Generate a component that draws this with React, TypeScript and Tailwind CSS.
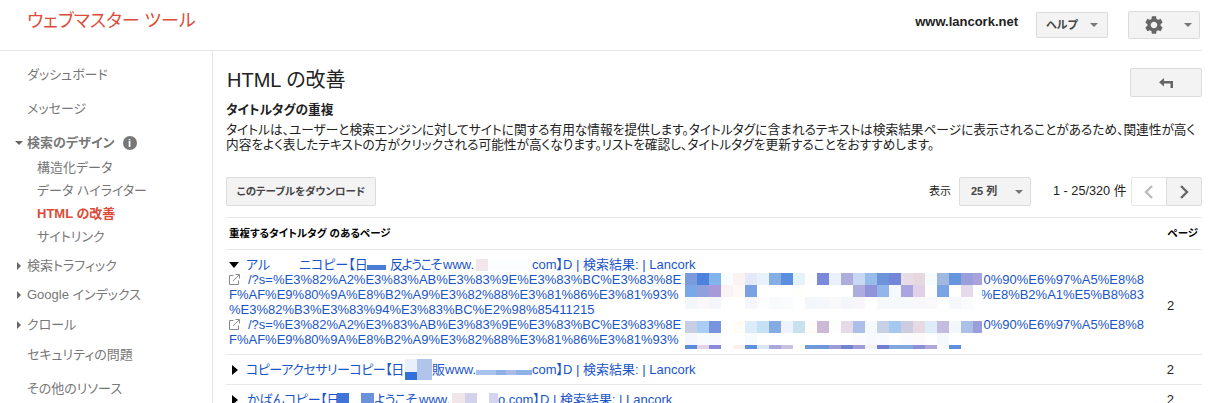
import React from "react";
import { MdSettings } from "react-icons/md";

const font = "font-['Liberation_Sans','Noto_Sans_CJK_JP',sans-serif] [font-feature-settings:'palt']";

function Caret() {
  return <span className="ml-auto w-0 h-0 border-x-[4px] border-x-transparent border-t-[4px] border-t-[#777]" />;
}

function Cells({ colors, h = 12 }: { colors: string[]; h?: number }) {
  return (
    <div className="flex w-[297px] overflow-hidden">
      {colors.map((c, i) => (
        <span key={i} className="block w-[12px] shrink-0" style={{ backgroundColor: c, height: h }} />
      ))}
    </div>
  );
}

const r1 = ["#7b9bdc","#4d82dc","#80b4ea","#f8fdff","#faf3f2","#e3e9f8","#e8f2fb","#85aee3","#5a8edf","#e4f2f9","#fdfdfd","#7a8ad8","#eaf1fb","#aeacdd","#c8d8f2","#96bdea","#6d94d8","#7387d8","#e8dce8","#e5d8df","#f4fcfd","#a0b8e0","#6595dd","#9a9fdb","#a8a3da"];
const r2 = ["#7aa8e6","#8fa0dd","#a89ad8","#f9f4f3","#fff9f6","#7aa2e2","#ffffff","#ffffff","#ffffff","#fefefc","#ffffff","#ffffff","#ffffff","#ffffff","#aeacdf","#9194da","#93b5ea","#f5fafc","#a9a5de","#e0d0e8","#fcfdfc","#78a3e4","#ffffff","#e5d9ea","#ffffff"];
const r3 = ["#f3f6fb","#fbf8fb","#f5f6fb","#ffffff","#ffffff","#f5f7fc","#fdfdfd","#f9fafc","#fafbfd","#ffffff","#f3f7fb","#f4f7fb","#f9f9fc","#f4f6fb","#f8f6fa","#ffffff","#f6f8fc","#f5f9fc","#f6f9fc","#f8f8fb","#fbf8fb","#ffffff","#f5f7fb","#fafbfd","#ffffff"];
const r4 = ["#c8cfe4","#aacdf5","#7894de","#ffffff","#fefcf5","#dcecfa","#c4e1f6","#84abe2","#eef3fd","#c9e0ee","#fffbf8","#ccb9d6","#fdfdfd","#e6dae8","#adbfe8","#f3f9fd","#c8d0e6","#a5c8f0","#cdcbe0","#e6d9e2","#dcecf9","#c5bde0","#f3f6fb","#abc0e8","#9a9fdc"];
const r5 = ["#f5f7fc","#f9fafd","#fafafd","#ffffff","#ffffff","#f8fafc","#ffffff","#ffffff","#ffffff","#ffffff","#ffffff","#ffffff","#ffffff","#ffffff","#fbfbfd","#f8f9fc","#f9fafd","#ffffff","#fbfafc","#fcfafb","#ffffff","#f6f8fc","#ffffff","#ffffff","#ffffff"];
const r6 = ["#5b8cdc","#e3d2e8","#8a8ad8","#ffffff","#fbf0ea","#5f90dc","#d8e8f8","#a9a8dc","#c8bfe0","#ffffff","#7099dc","#7097dc","#a09bd8","#6f85d4","#a09cd8","#f2f1f3","#6f7ed2","#80a8de","#80a8de","#8c8fd6","#afa6dc","#fbfbfc","#5f8fdc","#ffffff","#ffffff"];
const bar = ["#a9c4ec","#a9c4ec","#8fb1e4","#a9bde8","#8fb1e4","#8fb1e4"];

const longA = "/?s=%E3%82%A2%E3%83%AB%E3%83%9E%E3%83%BC%E3%83%8E";
const longB = "F%AF%E9%80%9A%E8%B2%A9%E3%82%88%E3%81%86%E3%81%93%";
const link = "text-[13px] text-[#1a55c8]";

function ExtIcon() {
  return (
    <svg width="11" height="11" viewBox="0 0 11 11" fill="none" stroke="#8a8a8a" strokeWidth="1" className="shrink-0">
      <path d="M4.5 1.5H.5v9h9V6.5" />
      <path d="M4 7L10 1M6.5.5h4v4" />
    </svg>
  );
}

function Tri({ open }: { open?: boolean }) {
  return open ? (
    <span className="w-0 h-0 border-x-[5px] border-x-transparent border-t-[6px] border-t-black" />
  ) : (
    <span className="w-0 h-0 border-y-[5px] border-y-transparent border-l-[6px] border-l-black ml-[3px]" />
  );
}

function SideTri({ open }: { open?: boolean }) {
  return open ? (
    <span className="absolute left-[15px] top-[6px] w-0 h-0 border-x-[4px] border-x-transparent border-t-[4px] border-t-[#666]" />
  ) : (
    <span className="absolute left-[17px] top-[4px] w-0 h-0 border-y-[4px] border-y-transparent border-l-[4px] border-l-[#666]" />
  );
}

function Side({ children, mt, tri, open }: { children: React.ReactNode; mt: string; tri?: boolean; open?: boolean }) {
  return (
    <div className={`relative pl-[27px] h-[16px] leading-[16px] text-[13px] text-[#777] ${mt}`}>
      {tri && <SideTri open={open} />}
      {children}
    </div>
  );
}

function Sub({ children, mt, active }: { children: React.ReactNode; mt: string; active?: boolean }) {
  return (
    <div className={`pl-[37px] h-[16px] leading-[16px] text-[13px] ${active ? "font-bold text-[#dd4b39]" : "text-[#777]"} ${mt}`}>
      {children}
    </div>
  );
}

function UrlLine({ left, right, icon }: { left: string; right?: string; icon?: boolean }) {
  return (
    <div className="flex items-center w-[915px] h-[15px] leading-[15px] whitespace-nowrap">
      {icon && <ExtIcon />}
      <span className={icon ? "ml-[8px]" : ""}>{left}</span>
      {right && <span className="ml-auto">{right}</span>}
    </div>
  );
}

export default function App() {
  return (
    <div className={`w-[1227px] h-[403px] overflow-hidden bg-white ${font}`}>
      <div className="w-[1202px]">
        <header className="h-[51px] border-b border-[#e5e5e5] flex items-center pl-[27px] pb-[9px]">
          <div className="text-[18px] leading-[24px] text-[#dd4b39] whitespace-nowrap">ウェブマスター ツール</div>
          <div className="ml-auto text-[13px] font-bold text-[#222] mt-[3px]">www.lancork.net</div>
          <div className="ml-[18px] mt-[9px] w-[72px] h-[26px] flex items-center pl-[9px] pr-[9px] bg-[#f3f3f3] border border-[#dcdcdc] rounded-[2px] text-[11px] font-bold text-[#444]">
            ヘルプ
            <Caret />
          </div>
          <div className="ml-[20px] mr-[2px] mt-[9px] w-[72px] h-[28px] flex items-center pl-[14px] pr-[7px] bg-[#f3f3f3] border border-[#dcdcdc] rounded-[2px]">
            <MdSettings size={22} color="#666" />
            <Caret />
          </div>
        </header>
        <div className="flex h-[352px]">
          <nav className="w-[213px] shrink-0 border-r border-[#e5e5e5] pt-[16px]">
            <Side mt="">ダッシュボード</Side>
            <Side mt="mt-[18px]">メッセージ</Side>
            <Side mt="mt-[18px]" tri open>
              <span className="flex items-center gap-[8px] font-bold">
                検索のデザイン
                <span className="w-[14px] h-[14px] rounded-full bg-[#777] text-white text-[11px] leading-[14px] text-center font-bold">i</span>
              </span>
            </Side>
            <Sub mt="mt-[9px]">構造化データ</Sub>
            <Sub mt="mt-[7px]">データ ハイライター</Sub>
            <Sub mt="mt-[7px]" active>HTML の改善</Sub>
            <Sub mt="mt-[7px]">サイトリンク</Sub>
            <Side mt="mt-[13px]" tri>検索トラフィック</Side>
            <Side mt="mt-[13px]" tri>Google インデックス</Side>
            <Side mt="mt-[14px]" tri>クロール</Side>
            <Side mt="mt-[14px]">セキュリティの問題</Side>
            <Side mt="mt-[18px]">その他のリソース</Side>
          </nav>
          <main className="flex-1 min-w-0 pl-[13px]">
            <div className="flex items-start pt-[17px] h-[45px]">
              <h1 className="ml-px text-[20px] leading-[24px] text-[#222]">HTML の改善</h1>
              <div className="ml-auto w-[72px] h-[29px] bg-[#f3f3f3] border border-[#dcdcdc] rounded-[2px] flex items-center justify-center">
                <svg width="14" height="10" viewBox="0 0 14 10" fill="#666">
                  <path d="M5 0L0 4.2 5 8.4V5.4H11.5V10H14V3H5z" />
                </svg>
              </div>
            </div>
            <h2 className="mt-[6px] text-[12.7px] leading-[16px] font-bold text-[#222]">タイトルタグの重複</h2>
            <p className="mt-[5px] text-[12.7px] leading-[15px] text-[#222] whitespace-nowrap">
              タイトルは、ユーザーと検索エンジンに対してサイトに関する有用な情報を提供します。タイトルタグに含まれるテキストは検索結果ページに表示されることがあるため、関連性が高く
              <br />
              内容をよく表したテキストの方がクリックされる可能性が高くなります。リストを確認し、タイトルタグを更新することをおすすめします。
            </p>
            <div className="mt-[24px] flex items-center h-[29px]">
              <button className="w-[150px] h-[29px] bg-[#f3f3f3] border border-[#dcdcdc] rounded-[2px] text-[10.5px] font-bold text-[#444]">
                このテーブルをダウンロード
              </button>
              <span className="ml-auto text-[11px] text-[#222]">表示</span>
              <div className="ml-[8px] w-[72px] h-[29px] flex items-center pl-[11px] pr-[7px] bg-[#f3f3f3] border border-[#dcdcdc] rounded-[2px] text-[11px] font-bold text-[#444]">
                25 列
                <Caret />
              </div>
              <span className="ml-[22px] w-[78px] text-[12.7px] text-[#222] whitespace-nowrap">1 - 25/320 件</span>
              <div className="flex">
                <div className="w-[36px] h-[29px] border border-[#e8e8e8] rounded-l-[2px] bg-white flex items-center justify-center">
                  <svg width="10" height="14" viewBox="0 0 10 14" fill="none" stroke="#bbb" strokeWidth="2.4"><path d="M8 1L2 7l6 6" /></svg>
                </div>
                <div className="w-[36px] h-[29px] -ml-px border border-[#dcdcdc] rounded-r-[2px] bg-[#f3f3f3] flex items-center justify-center">
                  <svg width="10" height="14" viewBox="0 0 10 14" fill="none" stroke="#666" strokeWidth="2.4"><path d="M2 1l6 6-6 6" /></svg>
                </div>
              </div>
            </div>
            <div className="mt-[11px] h-[33px] border-y border-[#e8e8e8] flex items-center pl-[3px] pr-[4px] text-[10.5px] font-bold text-black">
              <span>重複するタイトルタグ のあるページ</span>
              <span className="ml-auto">ページ</span>
            </div>
            <div className={`h-[105px] border-b border-[#e8e8e8] flex pl-[3px] pt-[7px] ${link}`}>
              <div className="w-[917px] shrink-0">
                <div className="flex items-center h-[15px] leading-[15px] whitespace-nowrap">
                  <Tri open />
                  <span className="ml-[7px] w-[53px] shrink-0">アル</span>
                  <span className="w-[68px] shrink-0">ニコピー【日</span>
                  <span className="w-[19px] h-[5px] mt-[6px] bg-[#4a7bd5] shrink-0" />
                  <span className="ml-[4px] w-[53px] shrink-0 tracking-[-1.5px]">反ようこそ</span>
                  <span className="w-[33px] shrink-0">www.</span>
                  <span className="block w-[12px] h-[12px] bg-[#f3e6ea] shrink-0" />
                  <span className="block w-[44px] h-[12px] bg-[#fbfdfe] shrink-0" />
                  <span>com】D | 検索結果: | Lancork</span>
                </div>
                <div className="relative">
                  <UrlLine icon left={longA} right="0%90%E6%97%A5%E8%8" />
                  <UrlLine left={longB} right="%E8%B2%A1%E5%B8%83" />
                  <UrlLine left="%E3%82%B3%E3%83%94%E3%83%BC%E2%98%85411215" />
                  <UrlLine icon left={longA} right="0%90%E6%97%A5%E8%8" />
                  <UrlLine left={longB} />
                  <div className="absolute left-[456px] top-[1px]">
                    <Cells colors={r1} />
                    <Cells colors={r2} />
                    <Cells colors={r3} />
                  </div>
                  <div className="absolute left-[456px] top-[49px]">
                    <Cells colors={r4} />
                    <Cells colors={r5} />
                    <Cells colors={r6} h={4} />
                  </div>
                </div>
              </div>
              <div className="ml-[21px] self-center text-[13px] text-[#222]">2</div>
            </div>
            <div className={`h-[30px] border-b border-[#e8e8e8] flex items-center pl-[3px] whitespace-nowrap ${link}`}>
              <Tri />
              <span className="ml-[8px] w-[159px] shrink-0 tracking-[-0.5px]">コピーアクセサリーコピー【日</span>
              <span className="grid grid-cols-[12px_15px] grid-rows-[13px_8px] shrink-0">
                <span className="bg-[#eaf0fb]" />
                <span className="row-span-2 bg-[#b0c4ec]" />
                <span className="bg-[#3370d8]" />
              </span>
              <span className="w-[44px] shrink-0">販www.</span>
              <span className="flex mt-[5px] w-[56px] shrink-0 overflow-hidden">
                {bar.map((c, i) => (
                  <span key={i} className="block w-[10px] h-[5px] shrink-0" style={{ backgroundColor: c }} />
                ))}
              </span>
              <span>com】D | 検索結果: | Lancork</span>
              <span className="ml-auto mr-[28px] text-[#222]">2</span>
            </div>
            <div className={`h-[30px] flex items-center pl-[3px] whitespace-nowrap ${link}`}>
              <Tri />
              <span className="ml-[9px] w-[90px] shrink-0 tracking-[-0.3px]">かばんコピー【日</span>
              <span className="block w-[12px] h-[14px] bg-[#3f74d8] shrink-0" />
              <span className="w-[12px] shrink-0" />
              <span className="block w-[13px] h-[14px] bg-[#6a92dd] shrink-0" />
              <span className="w-[45px] shrink-0 tracking-[-0.7px]">ようこそ</span>
              <span className="w-[33px] shrink-0">www.</span>
              <span className="block w-[13px] h-[14px] bg-[#f0e6ea] shrink-0" />
              <span className="block w-[12px] h-[14px] bg-[#d2d2ec] shrink-0" />
              <span className="block w-[12px] h-[14px] shrink-0" />
              <span className="block w-[9px] h-[14px] bg-[#d4d4ee] shrink-0" />
              <span>o.com】D | 検索結果: | Lancork</span>
              <span className="ml-auto mr-[28px] text-[#222]">2</span>
            </div>
          </main>
        </div>
      </div>
    </div>
  );
}
